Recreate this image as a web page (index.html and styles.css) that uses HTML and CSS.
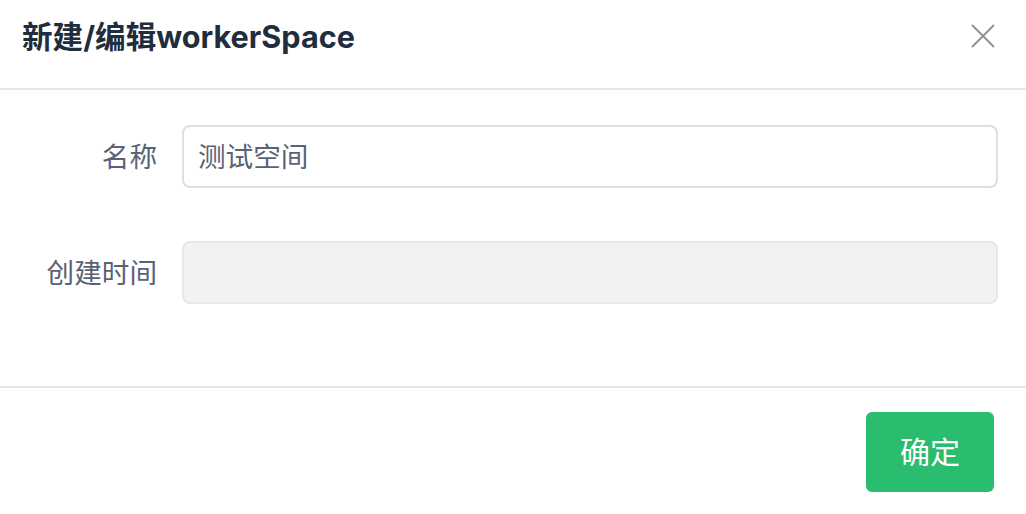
FILE: index.html
```html
<!DOCTYPE html>
<html lang="zh">
<head>
<meta charset="utf-8">
<link rel="stylesheet" href="styles.css">
</head>
<body>
<div class="dialog">
  <div class="header">
    <div class="title">新建/编辑workerSpace</div>
    <button class="close" aria-label="关闭">
      <svg width="24" height="24" viewBox="0 0 24 24"><path d="M1 1 L23 23 M23 1 L1 23" stroke="#909399" stroke-width="2" fill="none"/></svg>
    </button>
  </div>
  <div class="body">
    <div class="row">
      <label class="label">名称</label>
      <div class="input">测试空间</div>
    </div>
    <div class="row">
      <label class="label">创建时间</label>
      <div class="input disabled"></div>
    </div>
  </div>
  <div class="footer">
    <button class="btn">确定</button>
  </div>
</div>
</body>
</html>
```
FILE: styles.css
```css
html, body {
  margin: 0;
  padding: 0;
  background: #fff;
}
body {
  font-family: "Noto Sans CJK SC", "Noto Sans", sans-serif;
  width: 1026px;
  height: 514px;
  overflow: hidden;
}
.dialog {
  display: flex;
  flex-direction: column;
}
.header {
  height: 90px;
  border-bottom: 2px solid #e6e6e6;
  display: flex;
  align-items: center;
  justify-content: space-between;
  padding: 0 31px 0 22px;
  box-sizing: border-box;
}
.title {
  font-size: 30.6px;
  font-weight: 700;
  color: #1f2d3d;
  margin-top: -18px;
  font-family: "Inter", "Noto Sans CJK SC", sans-serif;
}
.close {
  border: none;
  background: none;
  padding: 0;
  width: 24px;
  height: 24px;
  margin-top: -16px;
  display: flex;
}
.body {
  height: 296px;
  box-sizing: border-box;
  padding: 35px 28px 0 0;
  display: flex;
  flex-direction: column;
  gap: 53px;
}
.row {
  display: flex;
  align-items: center;
}
.label {
  width: 157px;
  flex: none;
  box-sizing: border-box;
  margin-right: 25px;
  margin-bottom: 4px;
  text-align: right;
  font-size: 27.6px;
  color: #5a6275;
}
.input {
  flex: 1;
  height: 63px;
  box-sizing: border-box;
  border: 2px solid #dcdfe6;
  border-radius: 8px;
  padding: 0 14px 4px;
  font-size: 27.6px;
  color: #5a6275;
  display: flex;
  align-items: center;
}
.input.disabled {
  background: #f2f2f2;
  border-color: #e4e7ed;
}
.footer {
  border-top: 2px solid #e6e6e6;
  display: flex;
  justify-content: flex-end;
  padding: 24px 32px 0 0;
}
.btn {
  width: 128px;
  height: 80px;
  border: none;
  border-radius: 6px;
  background: #2bbd6f;
  color: #fff;
  font-size: 30px;
  font-family: "Noto Sans CJK SC", sans-serif;
  padding: 0 0 4px;
}
```
